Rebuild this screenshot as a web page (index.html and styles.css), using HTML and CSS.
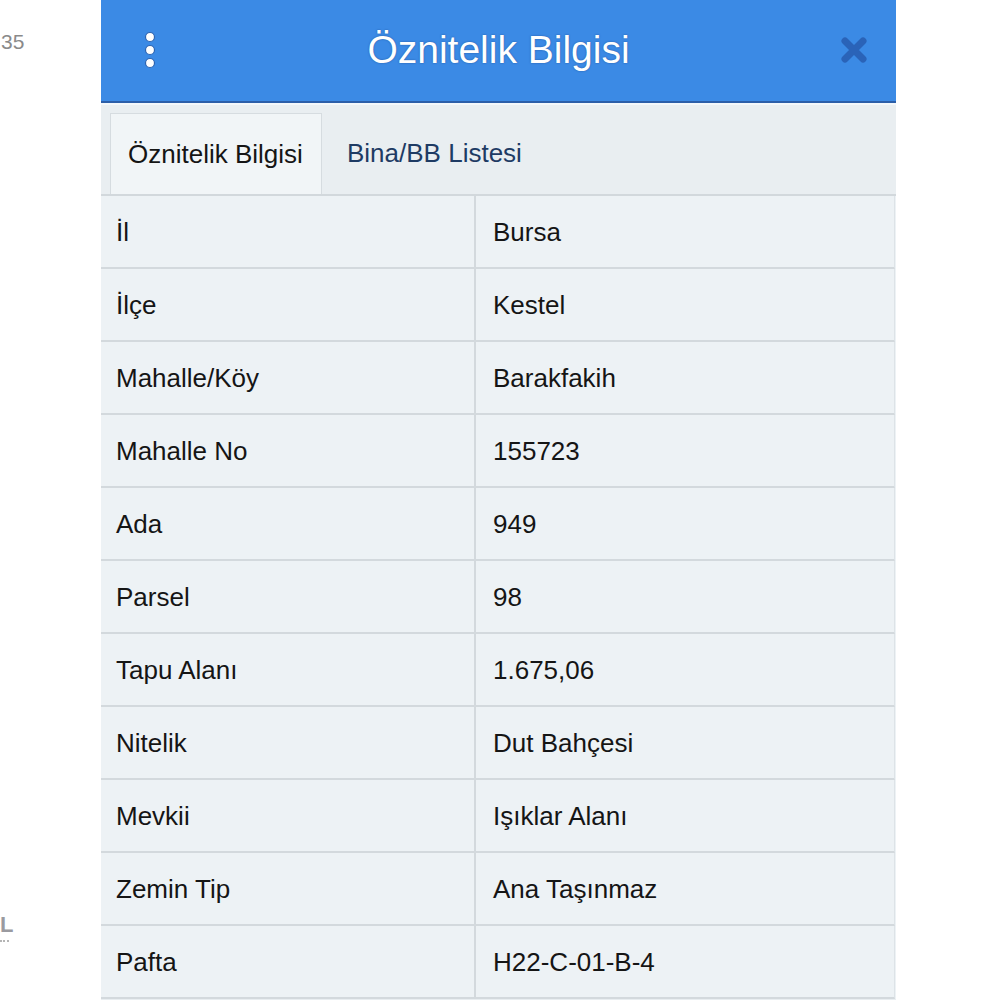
FILE: index.html
```html
<!DOCTYPE html>
<html lang="tr">

<head>
    <meta charset="UTF-8">
    <meta name="viewport" content="width=device-width, initial-scale=1.0">
    <title>Öznitelik Bilgisi</title>
    <link rel="stylesheet" href="styles.css">
</head>

<body>
    <div class="page">
        <!-- left edge of the map behind the panel -->
        <div class="gutter">
            <div class="gutter-num">35</div>
            <div class="gutter-logo">
                <span class="logo-letter">L</span>
                <span class="logo-line"></span>
            </div>
        </div>

        <div class="panel">
            <div class="header">
                <div class="menu-btn">
                    <svg width="14" height="40" viewBox="0 0 14 40">
                        <circle cx="7" cy="7" r="4.5" fill="#fff" stroke="#2d63b0" stroke-width="1.2"/>
                        <circle cx="7" cy="20" r="4.5" fill="#fff" stroke="#2d63b0" stroke-width="1.2"/>
                        <circle cx="7" cy="33" r="4.5" fill="#fff" stroke="#2d63b0" stroke-width="1.2"/>
                    </svg>
                </div>
                <h1 class="title">Öznitelik Bilgisi</h1>
                <div class="close-btn">
                    <svg width="28" height="28" viewBox="0 0 28 28">
                        <path d="M5 5 L23 23 M23 5 L5 23" stroke="#2a63b8" stroke-width="7" stroke-linecap="round"/>
                    </svg>
                </div>
            </div>

            <div class="tabs">
                <div class="tab active">Öznitelik Bilgisi</div>
                <div class="tab">Bina/BB Listesi</div>
            </div>

            <div class="table">
                <div class="cell key">İl</div><div class="cell val">Bursa</div>
                <div class="cell key">İlçe</div><div class="cell val">Kestel</div>
                <div class="cell key">Mahalle/Köy</div><div class="cell val">Barakfakih</div>
                <div class="cell key">Mahalle No</div><div class="cell val">155723</div>
                <div class="cell key">Ada</div><div class="cell val">949</div>
                <div class="cell key">Parsel</div><div class="cell val">98</div>
                <div class="cell key">Tapu Alanı</div><div class="cell val">1.675,06</div>
                <div class="cell key">Nitelik</div><div class="cell val">Dut Bahçesi</div>
                <div class="cell key">Mevkii</div><div class="cell val">Işıklar Alanı</div>
                <div class="cell key">Zemin Tip</div><div class="cell val">Ana Taşınmaz</div>
                <div class="cell key">Pafta</div><div class="cell val">H22-C-01-B-4</div>
            </div>
        </div>
    </div>
</body>

</html>
```

FILE: styles.css
```css
body {
    margin: 0;
    background-color: #ffffff;
    font-family: "Liberation Sans", Arial, sans-serif;
    color: #151515;
}

.page {
    display: flex;
    height: 1000px;
    overflow: hidden;
}

.gutter {
    width: 101px;
    flex-shrink: 0;
    display: flex;
    flex-direction: column;
    justify-content: space-between;
    padding: 30px 0 58px 0;
    box-sizing: border-box;
    overflow: hidden;
}

.gutter-num {
    font-size: 21px;
    color: #8a8a8a;
    margin-left: 1px;
}

.gutter-logo {
    display: flex;
    flex-direction: column;
    gap: 4px;
}

.logo-letter {
    font-size: 22px;
    font-weight: bold;
    line-height: 22px;
    color: #9a9aa0;
}

.logo-line {
    width: 9px;
    border-top: 2px dotted #b5b5b5;
}

.panel {
    width: 795px;
    flex-shrink: 0;
    display: flex;
    flex-direction: column;
    background-color: #e9eef1;
}

.header {
    height: 101px;
    background-color: #3b8ae5;
    border-bottom: 2px solid #2b5ea8;
    display: grid;
    grid-template-columns: 98px 1fr 98px;
    align-items: center;
}

.menu-btn {
    display: flex;
    justify-content: center;
    padding-bottom: 2px;
}

.title {
    margin: 0;
    text-align: center;
    color: #ffffff;
    font-weight: normal;
    font-size: 39px;
    text-shadow: 0 0 2px #2456a0;
    padding-bottom: 2px;
}

.close-btn {
    display: flex;
    justify-content: center;
    padding-left: 14px;
    padding-bottom: 2px;
}

.tabs {
    display: flex;
    align-items: flex-end;
    padding-left: 9px;
    border-top: 2px solid #f3f7fa;
    border-bottom: 2px solid #d2d8dc;
    box-sizing: border-box;
    height: 93px;
}

.tab {
    height: 81px;
    display: flex;
    align-items: center;
    padding: 0 25px 0 25px;
    font-size: 26px;
    color: #1e3b64;
}

.tab.active {
    background-color: #f1f5f7;
    border: 1px solid #d6dce0;
    border-bottom: none;
    color: #151515;
    width: 212px;
    box-sizing: border-box;
    padding: 0 0 0 17px;
}

.table {
    display: grid;
    grid-template-columns: 375px 419px;
    grid-auto-rows: 73px;
    background-color: #edf2f5;
}

.cell {
    display: flex;
    align-items: center;
    font-size: 26px;
    border-bottom: 2px solid #d3d9dd;
    box-sizing: border-box;
    padding-top: 1px;
}

.key {
    padding-left: 15px;
    border-right: 2px solid #d3d9dd;
}

.val {
    padding-left: 17px;
    border-right: 1px solid #dde3e7;
}
```
